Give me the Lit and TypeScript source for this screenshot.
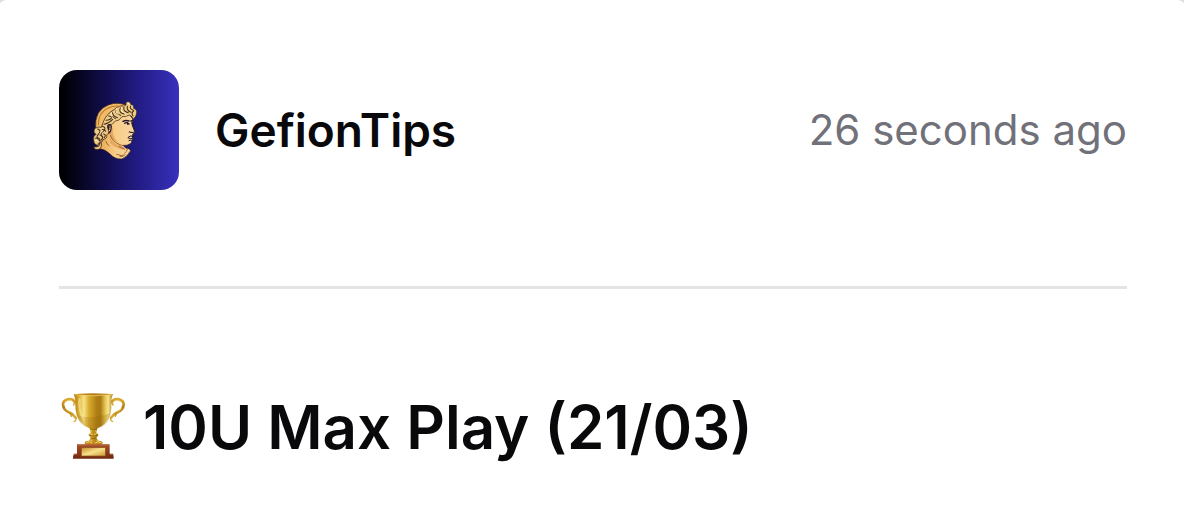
import { LitElement, html, css, svg } from "lit";
import { customElement, property } from "lit/decorators.js";

const portrait = svg`
  <defs>
    <linearGradient id="skin" x1="0" x2="1"><stop offset="0" stop-color="#eba850"/><stop offset=".45" stop-color="#f8cd88"/><stop offset="1" stop-color="#f9d6a0"/></linearGradient>
  </defs>
  <g stroke="#2a1a18" stroke-width="2" stroke-linejoin="round" stroke-linecap="round">
    <path fill="url(#skin)" d="M154 248 Q157 256 149 266 Q168 268 182 283 Q195 298 216 297 Q232 292 243 272 L238 266 Q228 268 220 256 Q232 258 242 251 Q248 247 246 241 L250 236 L247 229 Q251 226 249 222 Q257 219 256 214 L248 196 L249 176 L238 162 L200 168 L168 190 L166 232 Z"/>
    <path fill="#f2bb66" d="M138 206 Q133 150 178 134 Q206 124 232 137 L240 146 L196 148 Q168 164 162 190 L152 205 Z"/>
    <path fill="#f0cb84" d="M160 188 Q168 163 192 150 Q200 140 212 139 Q221 132 229 136 Q226 126 234 125 Q243 124 243 133 Q254 135 252 145 Q263 149 261 160 Q260 170 251 178 Q249 169 239 165 Q227 172 217 170 Q209 184 197 183 Q189 195 178 195 Q170 203 177 214 Q181 222 171 224 Q174 236 160 239 Q158 247 153 247 Q159 262 148 268 Q135 271 132 260 Q141 263 144 257 Q131 252 132 241 Q129 229 139 223 Q130 218 134 208 Q141 199 154 202 Z"/>
  </g>
  <g fill="none" stroke="#46301f" stroke-width="3.2" stroke-linecap="round">
    <path d="M146 194 Q146 158 174 145 Q194 134 218 140" stroke="#b97835"/>
    <path d="M163 193 Q178 190 189 178 M169 181 Q183 181 190 169 M177 168 Q190 170 197 176 M188 158 Q192 171 204 173 M199 150 Q195 162 213 166 M212 144 Q205 158 224 162 M223 140 Q219 155 236 158 M233 139 Q230 151 244 157 M243 138 Q238 145 251 151 M252 153 Q244 158 250 168"/>
    <path d="M158 199 Q173 203 160 215 Q149 222 159 232 M144 207 Q157 212 146 223 Q137 233 148 242 M151 225 Q166 229 155 240 M138 235 Q148 230 151 240 Q153 251 145 253 M154 209 Q166 207 168 214"/>
    <path d="M139 260 Q152 260 148 250 M162 222 Q171 225 164 233"/>
  </g>
  <g fill="none" stroke="#fff0b8" stroke-width="3" stroke-linecap="round"><path d="M185 158 Q184 171 194 178 M201 145 Q194 157 208 167 M216 142 Q210 155 228 160 M152 206 Q164 212 151 220 M138 241 Q144 235 147 244 M236 129 Q240 128 240 134"/></g>
  <path d="M190 200 Q184 225 205 246 Q188 246 178 222 Z M180 232 Q190 252 212 256 Q222 260 228 270 Q200 268 182 250 Z" fill="#d8944a" opacity=".6"/>
  <g fill="none" stroke="#241729" stroke-linecap="round">
    <path stroke-width="4.5" d="M220 184 Q229 179 238 183 M244 183 L248 182"/>
    <path stroke-width="4" d="M225 190 Q231 185 238 192 M234 188 V193 M246 189 L249 192"/>
    <path stroke-width="3" d="M248 194 L255 214 Q252 220 243 217 M238 216 Q241 212 244 218 M235 232 Q241 226 250 228 M236 234 Q243 238 249 235 M238 242 L244 240"/>
    <path stroke-width="3.5" d="M178 207 Q170 197 178 194 Q188 194 184 207 Q183 217 177 219 M181 201 Q175 199 177 209"/>
    <path stroke="#8f5426" stroke-width="2.5" d="M182 226 Q188 245 205 251 Q214 257 221 257 M208 260 L224 267 M201 283 Q216 290 226 285 M211 289 H219 M234 265 Q231 277 225 280 M169 244 Q170 253 178 257"/>
  </g>
`;

const trophy = svg`
  <defs>
    <linearGradient id="cup" x1="0" x2="1"><stop offset="0" stop-color="#a8750f"/><stop offset=".12" stop-color="#d9a928"/><stop offset=".26" stop-color="#f7e58a"/><stop offset=".38" stop-color="#dcae31"/><stop offset=".58" stop-color="#b07f14"/><stop offset=".68" stop-color="#a87a14"/><stop offset=".8" stop-color="#e6c451"/><stop offset=".88" stop-color="#f8e48c"/><stop offset="1" stop-color="#ac7814"/></linearGradient>
    <linearGradient id="handle" x1="0" y1="0" x2="0" y2="1"><stop offset="0" stop-color="#d9a72d"/><stop offset=".45" stop-color="#b37d14"/><stop offset="1" stop-color="#dcb038"/></linearGradient>
    <linearGradient id="wood" x1="0" y1="0" x2="0" y2="1"><stop offset="0" stop-color="#a9502a"/><stop offset="1" stop-color="#702810"/></linearGradient>
    <linearGradient id="plate" x1="0" y1="0" x2="1" y2="1"><stop offset="0" stop-color="#c78d27"/><stop offset=".5" stop-color="#f8e18e"/><stop offset="1" stop-color="#cb962f"/></linearGradient>
  </defs>
  <g fill="none" stroke="url(#handle)" stroke-linecap="round" stroke-linejoin="round">
    <path stroke-width="8" d="M61 55 Q54 43 39 46 Q23 50 24 62 Q26 79 42 85 Q54 90 62 101"/>
    <path stroke-width="8" d="M169 55 Q176 43 191 46 Q207 50 206 62 Q204 79 188 85 Q176 90 168 101"/>
    <path stroke-width="4" d="M59 54 L56 63 M171 54 L174 63 M62 101 Q65 111 57 113 M168 101 Q165 111 173 113 M45 87 L49 97 M185 87 L181 97"/>
  </g>
  <g fill="none" stroke="#f4de84" stroke-width="2" stroke-linecap="round"><path d="M30 54 Q38 45 50 49 M31 74 Q38 81 48 84 M180 49 Q192 45 200 54 M200 74 Q192 81 182 84"/></g>
  <path fill="url(#cup)" d="M56 31 Q62 42 61 63 Q61 94 76 113 Q88 127 104 133 L107 145 L101 153 L107 162 Q103 171 93 176 V182 H139 V176 Q128 171 124 162 L130 153 L124 145 L127 133 Q144 127 155 112 Q170 92 169 63 Q168 42 174 31 Z"/>
  <path d="M62 88 Q90 112 168 88 Q160 127 127 133 H104 Q70 124 62 88 Z" fill="#8d5f0b" opacity=".22"/>
  <ellipse cx="115" cy="31" rx="59" ry="3" fill="#b77f18"/><path d="M59 32 Q115 39 171 32" fill="none" stroke="#f6d671" stroke-width="2"/>
  <path d="M77 44 Q74 83 91 111 Q79 105 72 81 Q67 60 71 42 Z" fill="#fff9c4" opacity=".45"/>
  <path d="M104 134 Q116 139 127 134 M101 153 Q116 158 130 153 M107 162 Q116 166 124 162" fill="none" stroke="#7d5008" stroke-width="2"/>
  <path d="M109 140 Q101 150 113 153 M122 140 Q129 149 117 153 M103 173 Q112 166 117 178 Q123 166 133 174" fill="none" stroke="#f7dc74" stroke-width="3"/>
  <ellipse cx="103" cy="177" rx="14" ry="7" fill="#c18a1c"/><ellipse cx="129" cy="177" rx="14" ry="7" fill="#c18a1c"/>
  <path d="M94 176 Q103 169 111 177 M121 177 Q129 169 138 176" fill="none" stroke="#f7dc74" stroke-width="3"/>
  <path fill="url(#wood)" d="M66 181 H164 V209 H174 Q177 217 176 224 H54 Q53 216 57 209 H66 Z"/>
  <path d="M68 183 H162 M57 211 H65 M165 211 H173" stroke="#c4754a" stroke-width="2"/>
  <rect x="79" y="191" width="72" height="25" fill="url(#plate)" stroke="#8f541b" stroke-width="2"/>
`;

@customElement("app-root")
export class AppRoot extends LitElement {
  @property() author = "GefionTips";
  @property() posted = "26 seconds ago";

  static styles = css`
    :host {
      display: block;
      min-height: 100vh;
      background: #dedee1;
      font-family: Inter, sans-serif;
      color: #09090b;
    }
    .card {
      box-sizing: border-box;
      min-height: 100vh;
      padding: 70px 57px 48px 59px;
      background: #fff;
      border-radius: 8px 8px 0 0 / 4px 4px 0 0;
    }
    .header {
      display: flex;
      align-items: center;
      gap: 36px;
      padding-bottom: 96px;
      border-bottom: 3px solid #e4e4e7;
    }
    .avatar {
      flex: none;
      width: 120px;
      height: 120px;
      border-radius: 18px;
      background: linear-gradient(90deg, #000004 4%, #120e50 40%, #231d88 68%, #3930bd);
    }
    .name {
      flex: 1;
      font-size: 46px;
      line-height: 60px;
      font-weight: 600;
    }
    .time {
      font-size: 42px;
      line-height: 60px;
      color: #71717a;
      white-space: nowrap;
    }
    .title {
      display: flex;
      align-items: center;
      gap: 14px;
      margin: 96px 0 0;
      font-size: 60px;
      line-height: 84px;
      font-weight: 600;
    }
    .trophy {
      flex: none;
      width: 70px;
      height: 70px;
    }
  `;

  render() {
    return html`
      <article class="card">
        <header class="header">
          <svg class="avatar" viewBox="28 30 360 360" role="img" aria-label="GefionTips avatar">${portrait}</svg>
          <span class="name">${this.author}</span>
          <time class="time">${this.posted}</time>
        </header>
        <h1 class="title">
          <svg class="trophy" viewBox="12 24 210 210" role="img" aria-label="Trophy">${trophy}</svg>
          <span>10U Max Play (21/03)</span>
        </h1>
      </article>
    `;
  }
}
